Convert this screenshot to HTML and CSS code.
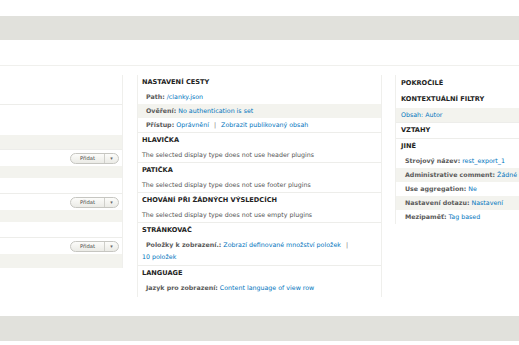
FILE: index.html
```html
<!DOCTYPE html>
<html lang="cs">
<head>
  <meta charset="UTF-8">
  <title>Views – REST export</title>
  <link rel="stylesheet" href="styles.css">
</head>
<body>

<div class="band"></div>
<div class="subbar"></div>

<div class="columns">
  <!-- left column: only the right edge of it is in view -->
  <div class="col col-left">
    <div class="bucket">
      <div class="left-head"></div>
      <div class="left-row"></div>
    </div>
    <div class="bucket">
      <div class="left-head"></div>
      <div class="left-row tall"></div>
      <div class="left-row odd"></div>
    </div>
    <div class="bucket">
      <div class="left-head"><div class="add-btn"><span class="txt">Přidat</span><span class="arrow">&#9662;</span></div></div>
      <div class="left-row odd short"></div>
      <div class="left-row tall"></div>
    </div>
    <div class="bucket">
      <div class="left-head"><div class="add-btn"><span class="txt">Přidat</span><span class="arrow">&#9662;</span></div></div>
      <div class="left-row odd short"></div>
      <div class="left-row tall"></div>
    </div>
    <div class="bucket last">
      <div class="left-head"><div class="add-btn"><span class="txt">Přidat</span><span class="arrow">&#9662;</span></div></div>
      <div class="left-row odd"></div>
    </div>
  </div>

  <div class="col col-main">
    <div class="bucket">
      <h3>Nastavení cesty</h3>
      <div class="setting"><span class="label">Path:</span> <a href="#">/clanky.json</a></div>
      <div class="setting odd"><span class="label">Ověření:</span> <a href="#">No authentication is set</a></div>
      <div class="setting"><span class="label">Přístup:</span> <a href="#">Oprávnění</a> <span class="sep">|</span> <a href="#">Zobrazit publikovaný obsah</a></div>
    </div>
    <div class="bucket">
      <h3>Hlavička</h3>
      <div class="note">The selected display type does not use header plugins</div>
    </div>
    <div class="bucket">
      <h3>Patička</h3>
      <div class="note">The selected display type does not use footer plugins</div>
    </div>
    <div class="bucket">
      <h3>Chování při žádných výsledcích</h3>
      <div class="note">The selected display type does not use empty plugins</div>
    </div>
    <div class="bucket">
      <h3>Stránkovač</h3>
      <div class="setting wrap"><span class="label">Položky k zobrazení.:</span> <a href="#">Zobrazí definované množství položek</a> <span class="sep">|</span> <a href="#" class="nowrap">10 položek</a></div>
    </div>
    <div class="bucket last">
      <h3>Language</h3>
      <div class="setting"><span class="label">Jazyk pro zobrazení:</span> <a href="#">Content language of view row</a></div>
    </div>
  </div>

  <div class="col col-side">
    <h3 class="summary">Pokročilé</h3>
    <div class="bucket">
      <h3>Kontextuální filtry</h3>
      <div class="item odd"><a href="#">Obsah: Autor</a></div>
    </div>
    <div class="bucket">
      <h3>Vztahy</h3>
    </div>
    <div class="bucket last">
      <h3>Jiné</h3>
      <div class="setting"><span class="label">Strojový název:</span> <a href="#">rest_export_1</a></div>
      <div class="setting odd"><span class="label">Administrative comment:</span> <a href="#">Žádné</a></div>
      <div class="setting"><span class="label">Use aggregation:</span> <a href="#">Ne</a></div>
      <div class="setting odd"><span class="label">Nastavení dotazu:</span> <a href="#">Nastavení</a></div>
      <div class="setting"><span class="label">Mezipaměť:</span> <a href="#">Tag based</a></div>
    </div>
  </div>
</div>

<div class="band bottom"></div>

</body>
</html>
```

FILE: styles.css
```css
body {
  margin: 0;
  font-family: "DejaVu Sans", Verdana, sans-serif;
  font-size: 6.3px;
  color: #333;
  background-color: #fff;
  overflow: hidden;
}
a {
  color: #0074bd;
  text-decoration: none;
}
.nowrap {
  white-space: nowrap;
}
h3 {
  margin: 0;
  font-size: 6.6px;
  line-height: 15px;
  font-weight: bold;
  text-transform: uppercase;
  color: #222;
}
.band {
  height: 24px;
  margin-top: 16px;
  background-color: #e1e1dc;
}
.band.bottom {
  height: 25px;
  margin-top: 19px;
}
.subbar {
  height: 25px;
  border-bottom: 1px solid #f0f0ed;
}
.columns {
  display: flex;
  align-items: flex-start;
  margin-top: 9px;
}
.col {
  flex: none;
}
.col-left {
  width: 122px;
  border-right: 1px solid #efefec;
}
.col-main {
  width: 243px;
  margin: 0 13px 0 14px;
  padding-bottom: 2px;
  border-left: 1px solid #efefec;
  border-right: 1px solid #efefec;
}
.col-side {
  width: 160px;
  border-left: 1px solid #efefec;
  white-space: nowrap;
}
.bucket {
  border-bottom: 1px solid #ededea;
}
.bucket.last {
  border-bottom: none;
}
.odd {
  background-color: #f3f3ee;
}

/* left column */
.left-head {
  height: 15px;
  display: flex;
  justify-content: flex-end;
  align-items: center;
  padding-right: 3px;
}
.bucket + .bucket + .bucket .left-head {
  height: 16px;
}
.left-row {
  height: 14px;
}
.left-row.tall {
  height: 15px;
}
.left-row.short {
  height: 12px;
}
.add-btn {
  display: flex;
  align-items: center;
  height: 9px;
  border: 1px solid #c6c6c1;
  border-radius: 6px;
  background: linear-gradient(#fcfcfa, #ebebe6);
  font-size: 5.2px;
  color: #444;
}
.add-btn .txt {
  width: 33px;
  text-align: center;
}
.add-btn .arrow {
  width: 13px;
  text-align: center;
  border-left: 1px solid #cfcfca;
  line-height: 9px;
  font-size: 5px;
  color: #666;
}

/* middle column */
.col-main h3 {
  padding: 0 4px;
}
.col-main .setting {
  line-height: 14px;
  padding: 0 4px 0 8px;
}
.col-main .setting.wrap {
  line-height: 12px;
  padding: 1px 4px 2px 4px;
  text-indent: 4px;
}
.note {
  line-height: 14px;
  padding: 0 4px;
  color: #555;
}
.label {
  color: #5a5a5a;
  font-weight: bold;
}
.sep {
  color: #777;
  margin: 0 3px;
}

/* right column */
.col-side h3 {
  padding: 0 5px;
}
.col-side h3.summary {
  line-height: 17px;
}
.col-side h3 + .item {
  margin-top: 1px;
}
.item {
  line-height: 14px;
  padding: 0 5px;
}
.col-side .setting {
  line-height: 14px;
  padding: 0 5px 0 9px;
}
```
